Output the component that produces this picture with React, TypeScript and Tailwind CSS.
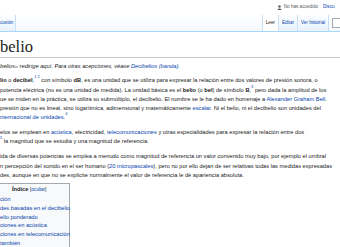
import React from "react";

const link = "text-[#0645ad]";

function Line({ children }: { children: React.ReactNode }) {
  return <div className="whitespace-nowrap">{children}</div>;
}

function Sup({ children }: { children: React.ReactNode }) {
  return <sup className={`${link} text-[4px] align-[2px] leading-none`}>{children}</sup>;
}

export default function App() {
  const toc = [
    "ción",
    "des basadas en el decibelio",
    "elio ponderado",
    "ciones en acústica",
    "ciones en telecomunicación",
    "también",
  ];

  return (
    <div className="w-[340px] h-[247px] overflow-hidden bg-white text-[#202122] font-['Liberation_Sans',Arial,sans-serif]">
      {/* personal tools */}
      <div className="h-[15px] flex items-center justify-end gap-[2px] text-[4.6px] whitespace-nowrap">
        <svg width="5" height="5" viewBox="0 0 10 10" className="fill-[#54595d]">
          <circle cx="5" cy="3" r="2.4" />
          <path d="M1 10 C1 6 9 6 9 10 Z" />
        </svg>
        <span className="text-[#54595d]">No has accedido</span>
        <span className={`${link} ml-[3px] w-[17px] overflow-hidden`}>Discu</span>
      </div>

      {/* tabs */}
      <div className="h-[17px] flex items-end border-b border-[#a7d7f9] bg-gradient-to-b from-white to-[#f3f8fe] text-[4.6px]">
        <div className="h-full flex items-center pr-[2px] bg-gradient-to-b from-[#fbfdff] to-[#e8f2fd] border-r border-[#c8dff5]">
          <span className={link}>cusión</span>
        </div>
        <div className="flex-1" />
        <div className="h-full flex items-center px-[3px] bg-white border-l border-r border-[#c8dff5] text-[#202122]">
          Leer
        </div>
        <div className="h-full flex items-center px-[3px] bg-gradient-to-b from-[#fbfdff] to-[#e8f2fd] border-r border-[#c8dff5]">
          <span className={link}>Editar</span>
        </div>
        <div className="h-full flex items-center px-[3px] bg-gradient-to-b from-[#fbfdff] to-[#e8f2fd] border-r border-[#c8dff5]">
          <span className={link}>Ver historial</span>
        </div>
        <div className="h-full flex items-center pl-[3px]">
          <div className="w-[8px] h-[10px] border border-r-0 border-[#a2a9b1] bg-white" />
        </div>
      </div>

      {/* title */}
      <div className="mt-[5px] h-[21px] border-b border-[#c8ccd1] font-['Liberation_Serif',serif] text-[16.5px] leading-[20px]">
        belio
      </div>

      {/* body */}
      <div className="text-[5.7px] leading-[9.3px]">
        <div className="mt-[4px] italic">
          <Line>
            belios» redirige aquí. Para otras acepciones, véase <span className={link}>Decibelios (banda)</span>.
          </Line>
        </div>

        <div className="mt-[5px]">
          <Line>
            <b>lio</b> o <b>decibel</b>,<Sup>1 2</Sup> con símbolo <b>dB</b>, es una unidad que se utiliza para expresar la relación entre dos valores de presión sonora, o
          </Line>
          <Line>
            potencia eléctrica (no es una unidad de medida). La unidad básica es el <b>belio</b> (o <b>bel</b>) de símbolo <b>B</b>,<Sup>3</Sup> pero dada la amplitud de los
          </Line>
          <Line>
            ue se miden en la práctica, se utiliza su submúltiplo, el decibelio. El nombre se le ha dado en homenaje a <span className={link}>Alexander Graham Bell</span>.
          </Line>
          <Line>
            presión que no es lineal, sino logarítmica, adimensional y matemáticamente <span className={link}>escalar</span>. Ni el belio, ni el decibelio son unidades del
          </Line>
          <Line>
            <span className={link}>nternacional de unidades</span>.<Sup>4</Sup>
          </Line>
        </div>

        <div className="mt-[5px]">
          <Line>
            elos se emplean en <span className={link}>acústica</span>, electricidad, <span className={link}>telecomunicaciones</span> y otras especialidades para expresar la relación entre dos
          </Line>
          <Line>
            <Sup>5</Sup> la magnitud que se estudia y una magnitud de referencia.
          </Line>
        </div>

        <div className="mt-[6px]">
          <Line>
            ida de diversas potencias se emplea a menudo como magnitud de referencia un valor convenido muy bajo, por ejemplo el umbral
          </Line>
          <Line>
            n percepción del sonido en el ser humano (<span className={link}>20 micropascales</span>), pero no por ello dejan de ser relativas todas las medidas expresadas
          </Line>
          <Line>
            des, aunque en que no se explicite normalmente el valor de referencia le dé apariencia absoluta.
          </Line>
        </div>

        {/* table of contents */}
        <div className="mt-[3px] w-[70px] border border-l-0 border-[#a2a9b1] bg-[#f8f9fa] leading-[8.8px] pt-[1px]">
          <div className="pl-[12px] whitespace-nowrap">
            <b>Índice</b> <span className="text-[4.6px]">[<span className={link}>ocultar</span>]</span>
          </div>
          {toc.map((t) => (
            <div key={t} className={`${link} whitespace-nowrap`}>
              {t}
            </div>
          ))}
        </div>
      </div>
    </div>
  );
}
